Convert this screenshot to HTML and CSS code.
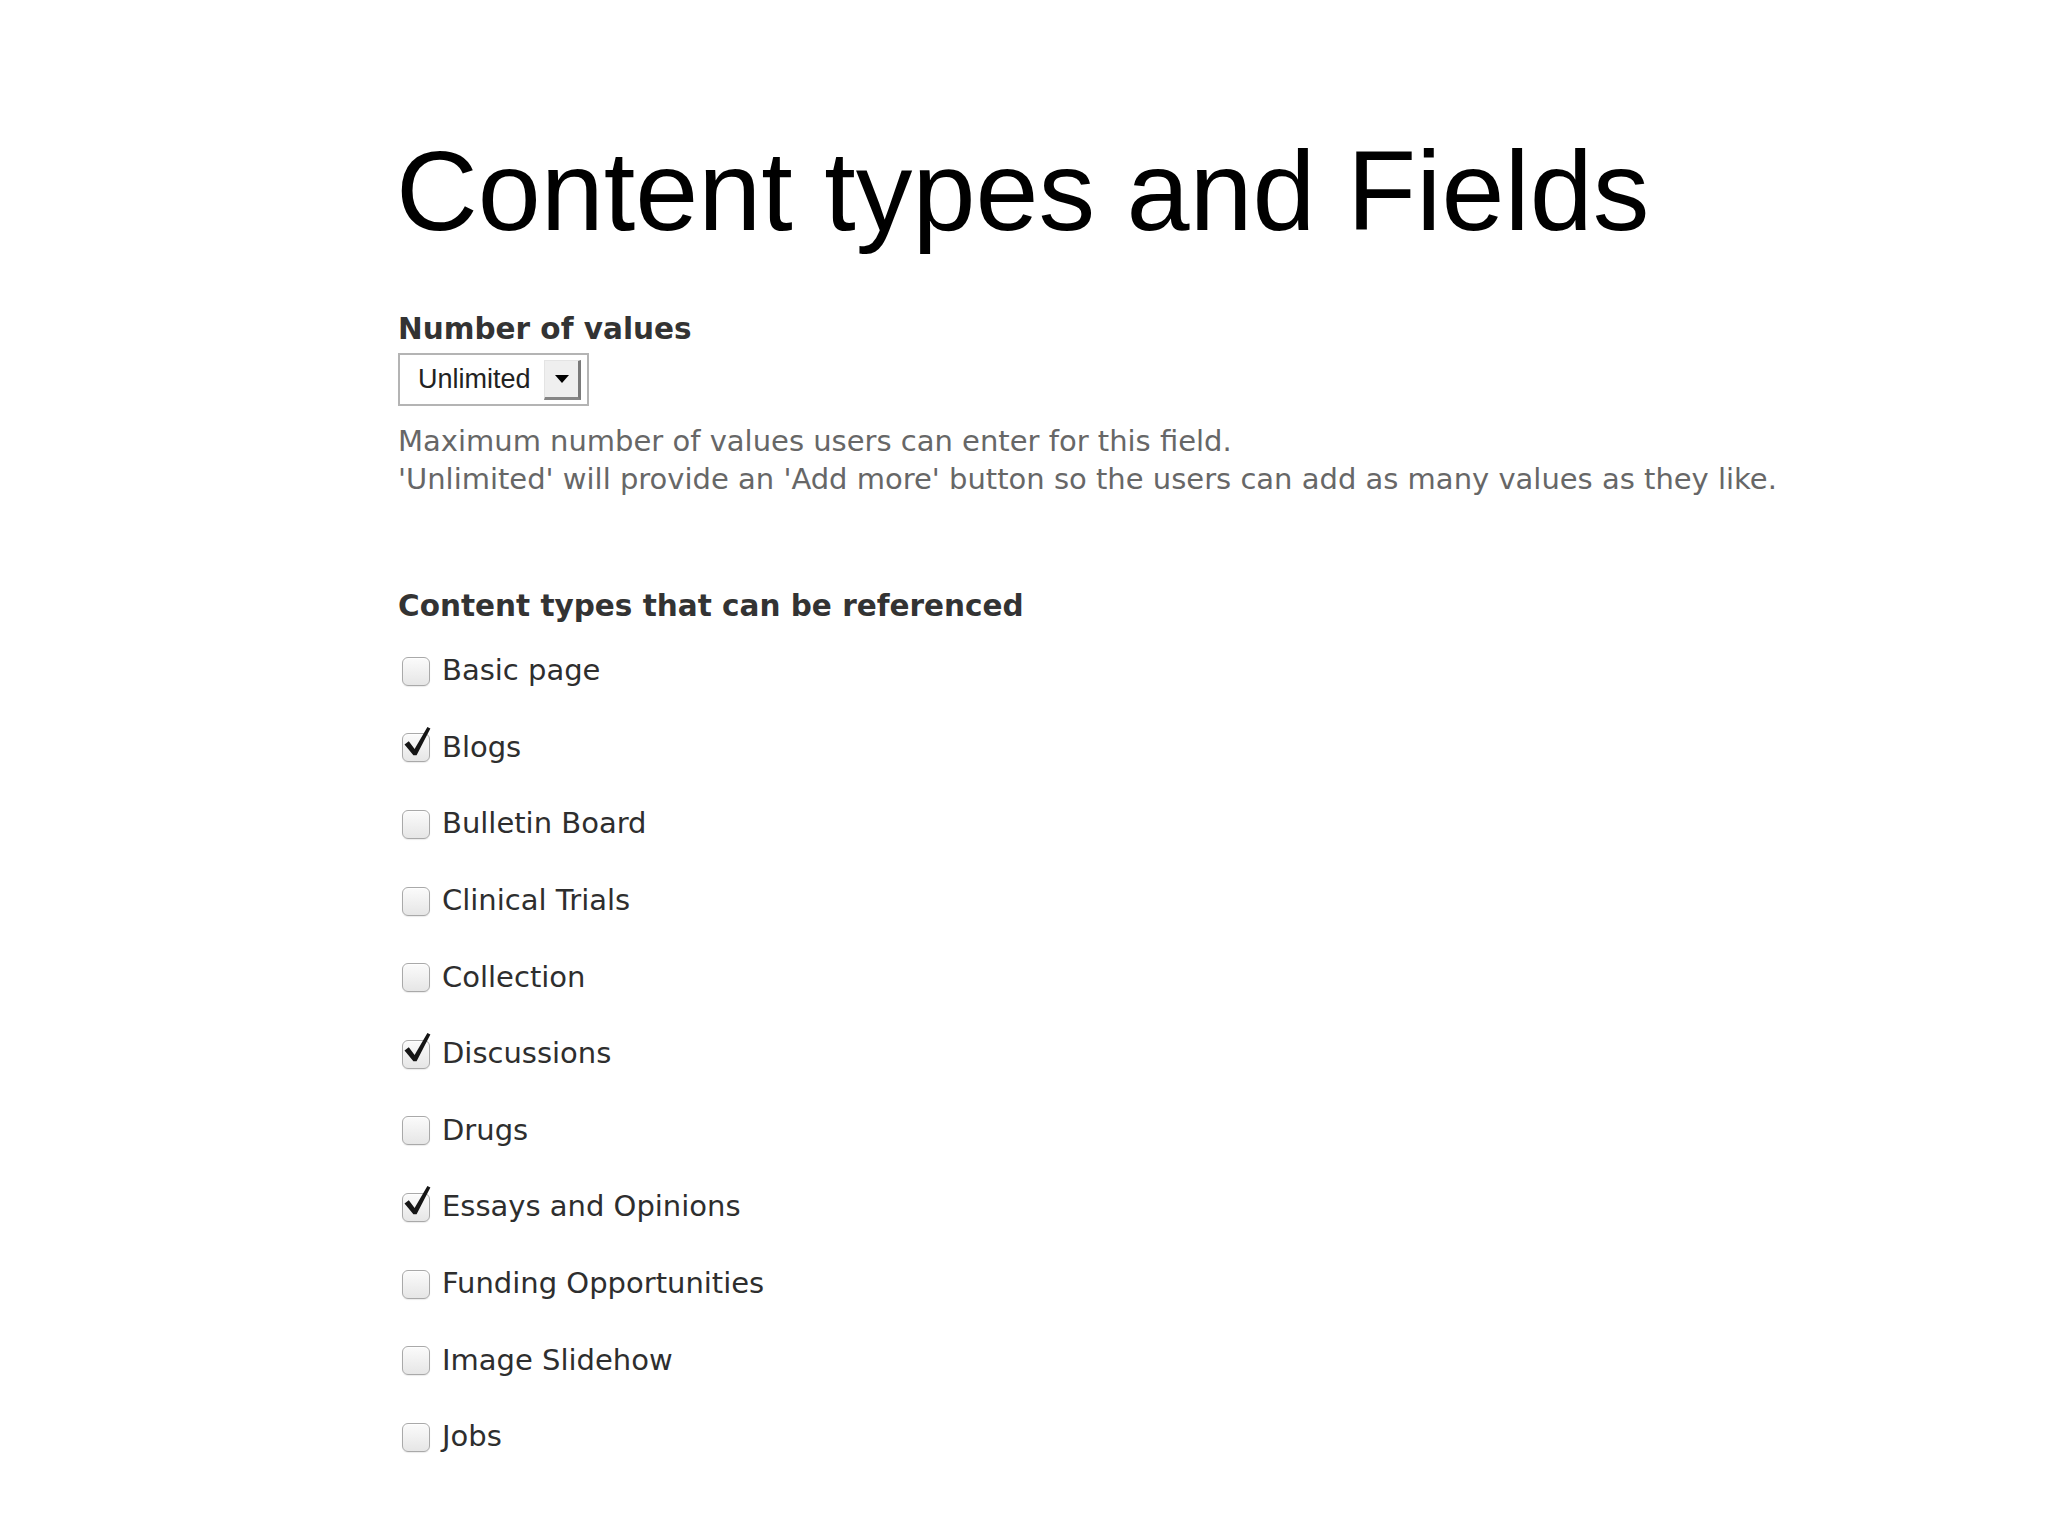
FILE: index.html
```html
<!DOCTYPE html>
<html lang="en">
<head>
<meta charset="utf-8">
<title>Content types and Fields</title>
<link rel="stylesheet" href="styles.css">
</head>
<body>
<div class="page">
  <h1 class="title">Content types and Fields</h1>

  <div class="field">
    <div class="label">Number of values</div>
    <div class="select">
      <span class="select-text">Unlimited</span>
      <span class="select-btn"><span class="arrow"></span></span>
    </div>
    <div class="desc">
      <div>Maximum number of values users can enter for this field.</div>
      <div>'Unlimited' will provide an 'Add more' button so the users can add as many values as they like.</div>
    </div>
  </div>

  <div class="field field-types">
    <div class="label">Content types that can be referenced</div>
    <div class="options">
      <div class="option"><span class="cb"></span><span class="opt-text">Basic page</span></div>
      <div class="option"><span class="cb checked"><svg class="check" viewBox="0 0 28 28"><path d="M2.5 11.5 L6.8 8.2 L12.6 16 L25.4 -6 L28.4 -4.4 L14.6 22.2 L11.4 22.2 Z"/></svg></span><span class="opt-text">Blogs</span></div>
      <div class="option"><span class="cb"></span><span class="opt-text">Bulletin Board</span></div>
      <div class="option"><span class="cb"></span><span class="opt-text">Clinical Trials</span></div>
      <div class="option"><span class="cb"></span><span class="opt-text">Collection</span></div>
      <div class="option"><span class="cb checked"><svg class="check" viewBox="0 0 28 28"><path d="M2.5 11.5 L6.8 8.2 L12.6 16 L25.4 -6 L28.4 -4.4 L14.6 22.2 L11.4 22.2 Z"/></svg></span><span class="opt-text">Discussions</span></div>
      <div class="option"><span class="cb"></span><span class="opt-text">Drugs</span></div>
      <div class="option"><span class="cb checked"><svg class="check" viewBox="0 0 28 28"><path d="M2.5 11.5 L6.8 8.2 L12.6 16 L25.4 -6 L28.4 -4.4 L14.6 22.2 L11.4 22.2 Z"/></svg></span><span class="opt-text">Essays and Opinions</span></div>
      <div class="option"><span class="cb"></span><span class="opt-text">Funding Opportunities</span></div>
      <div class="option"><span class="cb"></span><span class="opt-text">Image Slidehow</span></div>
      <div class="option"><span class="cb"></span><span class="opt-text">Jobs</span></div>
    </div>
  </div>
</div>
</body>
</html>
```

FILE: styles.css
```css
html, body {
  margin: 0;
  padding: 0;
  background: #ffffff;
}

.page {
  padding: 134px 0 0 398px;
}

.title {
  margin: 0;
  font-family: "Liberation Sans", Arial, sans-serif;
  font-weight: normal;
  font-size: 113.3px;
  line-height: 113px;
  color: #000;
  margin-left: -2px;
}

.field {
  margin-top: 64px;
}

.label {
  font-family: "DejaVu Sans", Verdana, sans-serif;
  font-weight: bold;
  font-size: 29.5px;
  line-height: 36px;
  color: #333;
}

.select {
  margin-top: 6px;
  width: 191px;
  height: 53px;
  box-sizing: border-box;
  border: 2px solid #b4b4b4;
  background: #fff;
  display: flex;
  align-items: center;
  justify-content: space-between;
  padding: 0 6px 0 18px;
}

.select-text {
  font-family: "Liberation Sans", Arial, sans-serif;
  font-size: 27px;
  color: #222;
  letter-spacing: 0;
}

.select-btn {
  width: 37px;
  height: 40px;
  box-sizing: border-box;
  background: #efefef;
  border-top: 1px solid #e4e4e4;
  border-left: 1px solid #e4e4e4;
  border-right: 3px solid #7a7a7a;
  border-bottom: 3px solid #868686;
  display: flex;
  align-items: center;
  justify-content: center;
  margin-top: 1px;
}

.arrow {
  width: 0;
  height: 0;
  border-left: 7px solid transparent;
  border-right: 7px solid transparent;
  border-top: 8px solid #000;
  margin: 0 0 1px 1px;
}

.desc {
  margin-top: 16px;
  font-family: "DejaVu Sans", Verdana, sans-serif;
  font-size: 29px;
  line-height: 38px;
  color: #676767;
}

.field-types {
  margin-top: 90px;
}

.options {
  margin-top: 8px;
  display: flex;
  flex-direction: column;
}

.option {
  height: 76.6px;
  display: flex;
  align-items: center;
  gap: 12px;
  padding-left: 4px;
}

.cb {
  position: relative;
  width: 28px;
  height: 29px;
  box-sizing: border-box;
  border: 1.5px solid #a9a9a9;
  border-radius: 6px;
  background: linear-gradient(#fbfbfb, #e6e6e6);
  box-shadow: inset 0 1px 1px rgba(255,255,255,0.8), 0 1px 1px rgba(0,0,0,0.08);
  flex: none;
  margin-top: 2px;
}

.check {
  position: absolute;
  left: -1.5px;
  top: -1.5px;
  width: 28px;
  height: 28px;
  overflow: visible;
  fill: #151515;
}

.opt-text {
  font-family: "DejaVu Sans", Verdana, sans-serif;
  font-size: 29px;
  line-height: 36px;
  color: #2e2e2e;
}
```
